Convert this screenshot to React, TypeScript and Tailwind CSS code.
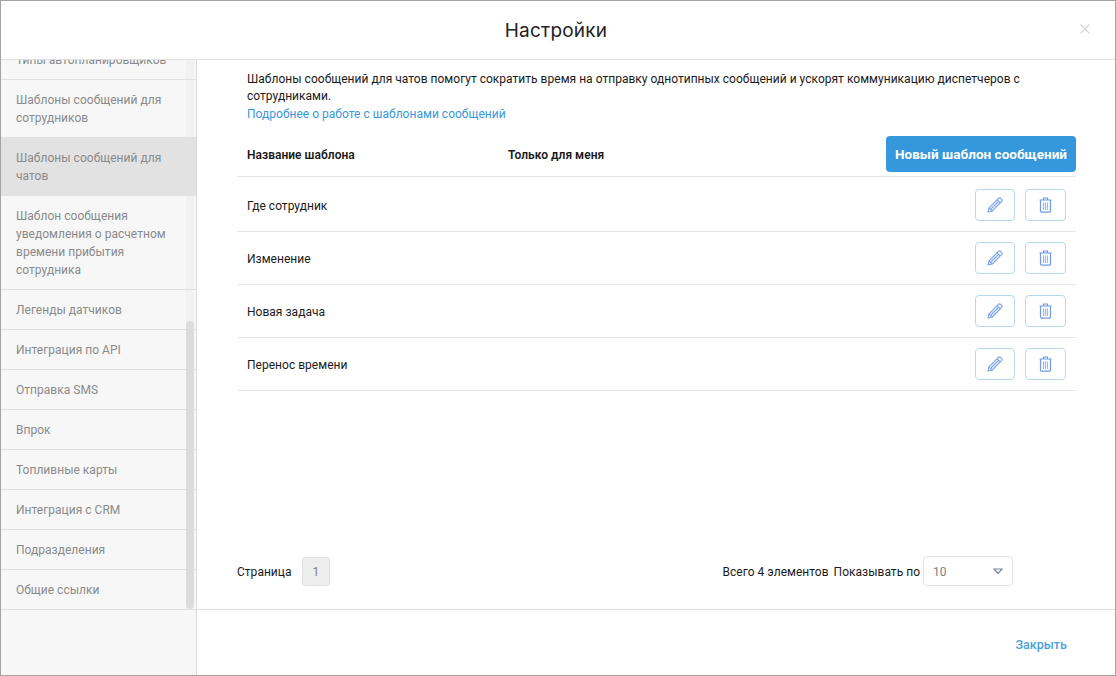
const menu = [
  { title: "Шаблоны сообщений для сотрудников" },
  { title: "Шаблоны сообщений для чатов", active: true },
  { title: "Шаблон сообщения уведомления о расчетном времени прибытия сотрудника" },
  { title: "Легенды датчиков" },
  { title: "Интеграция по API" },
  { title: "Отправка SMS" },
  { title: "Впрок" },
  { title: "Топливные карты" },
  { title: "Интеграция с CRM" },
  { title: "Подразделения" },
  { title: "Общие ссылки" },
];

const templates = ["Где сотрудник", "Изменение", "Новая задача", "Перенос времени"];

function PencilIcon() {
  return (
    <svg width="16" height="16" viewBox="0 0 16 16" fill="none" stroke="#7ba4e8" strokeWidth="1.1" strokeLinejoin="round">
      <path d="M1 15l1-4.2L11.6 1.2a1.2 1.2 0 0 1 1.7 0l1.5 1.5a1.2 1.2 0 0 1 0 1.7L5.2 14z" fill="#f1f5fd" />
      <path d="M2 10.8L5.2 14M10 2.8l3.2 3.2M4 11.9l6.9-6.9" />
    </svg>
  );
}

function TrashIcon() {
  return (
    <svg width="13" height="16" viewBox="0 0 13 16" fill="none" stroke="#6f9be6" strokeWidth="1.2">
      <path d="M0.5 3h12M4.5 3V1h4v2" />
      <path d="M1.5 3v10.8a1.4 1.4 0 0 0 1.4 1.4h7.2a1.4 1.4 0 0 0 1.4-1.4V3" />
      <path d="M4.5 5.5v7.5M6.5 5.5v7.5M8.5 5.5v7.5" stroke="#9dbcee" />
    </svg>
  );
}

function TemplateRow({ name, first }: { name: string; first: boolean }) {
  return (
    <div className={`flex items-center justify-between border-b border-[#e6e6e6] px-[10px] ${first ? "h-[55px] pt-[2px]" : "h-[53px]"}`}>
      <span className="pt-[2px]">{name}</span>
      <div className="flex gap-[10px]">
        <button className="flex h-[32px] w-[40px] items-center justify-center rounded-[4px] border border-[#b5d8f0]">
          <PencilIcon />
        </button>
        <button className="flex h-[32px] w-[41px] items-center justify-center rounded-[4px] border border-[#b5d8f0]">
          <TrashIcon />
        </button>
      </div>
    </div>
  );
}

export default function App() {
  return (
    <div className="flex h-[676px] w-[1116px] flex-col overflow-hidden border border-[#a3a3a3] bg-white font-['Roboto',sans-serif] text-[12px] tracking-[0.02px] text-[#1a1a1a]">
      {/* Header */}
      <div className="relative flex h-[59px] shrink-0 items-center justify-center border-b border-[#e0e0e0]">
        <h1 className="mr-[4px] pt-[2px] font-['Inter',sans-serif] text-[19px] font-normal tracking-[0.2px] text-[#222]">Настройки</h1>
        <span className="absolute right-[25px] top-[23px] text-[#d4d4d4]">
          <svg width="10" height="10" viewBox="0 0 10 10" fill="none" stroke="currentColor" strokeWidth="1.1" className="block">
            <path d="M0.5 0.5l9 9M9.5 0.5l-9 9" />
          </svg>
        </span>
      </div>

      <div className="flex min-h-0 flex-1">
        {/* Sidebar */}
        <div className="relative w-[196px] shrink-0 overflow-hidden border-r border-[#dcdcdc] bg-[#f7f7f7] text-[#8a8a8a]">
          <div className="absolute bottom-[66px] right-[2px] top-0 w-[8px] rounded-[4px] bg-[#f1f1f1]" />
          <div className="relative h-[20px] overflow-hidden border-b border-[#e0e0e0] pl-[15px]">
            <span className="absolute top-[-9px] whitespace-nowrap">Типы автопланировщиков</span>
          </div>
          {menu.map((item) => (
            <div
              key={item.title}
              className={`relative border-b border-[#e0e0e0] pb-[10px] pl-[15px] pr-[20px] pt-[11px] leading-[18px] ${item.active ? "bg-[#e2e2e2]" : ""}`}
            >
              {item.title}
            </div>
          ))}
          <div className="absolute bottom-[66px] right-[2px] h-[288px] w-[8px] rounded-[4px] bg-[#dcdcdc]" />
        </div>

        {/* Main column */}
        <div className="flex min-w-0 flex-1 flex-col">
          <div className="flex min-h-0 flex-1 flex-col pl-[40px] pr-[39px]">
            <div className="pl-[10px] pr-[10px] pt-[10.5px] leading-[17.5px]">
              <p>
                Шаблоны сообщений для чатов помогут сократить время на отправку однотипных сообщений и ускорят коммуникацию диспетчеров с сотрудниками.
              </p>
              <a className="text-[#3a96dd]">Подробнее о работе с шаблонами сообщений</a>
            </div>

            {/* Table header */}
            <div className="mt-[13px] flex h-[41px] items-start border-b border-[#e6e6e6] pl-[10px] font-semibold">
              <span className="mt-[10px] w-[261px]">Название шаблона</span>
              <span className="mt-[10px]">Только для меня</span>
              <button className="ml-auto h-[36px] w-[190px] rounded-[4px] bg-[#3598dc] text-[13.5px] font-bold text-white">
                Новый шаблон сообщений
              </button>
            </div>

            {templates.map((name, i) => (
              <TemplateRow key={name} name={name} first={i === 0} />
            ))}

            {/* Pagination */}
            <div className="mt-auto flex items-center justify-between pb-[23px] pr-[63px]">
              <div className="flex items-center gap-[10px]">
                <span className="w-[55px] pt-[2px]">Страница</span>
                <span className="flex h-[29px] w-[28px] items-center justify-center rounded-[3px] border border-[#e2e2e2] bg-[#eeeeee] pt-[2px] text-[#808080]">
                  1
                </span>
              </div>
              <div className="flex items-center">
                <span className="pt-[2px]">Всего 4 элементов</span>
                <span className="ml-[5px] pt-[2px]">Показывать по</span>
                <div className="ml-[3px] flex h-[30px] w-[90px] items-center justify-between rounded-[4px] border border-[#e2e2e2] pl-[9px] pr-[9px] text-[#808080]">
                  <span className="pt-[2px]">10</span>
                  <svg width="10" height="7" viewBox="0 0 10 7" fill="none" stroke="#7a8696" strokeWidth="1.2">
                    <path d="M1 1h8L5 5.5z" />
                  </svg>
                </div>
              </div>
            </div>
          </div>

          {/* Footer */}
          <div className="flex h-[66px] shrink-0 items-center justify-end border-t border-[#e0e0e0] pr-[48px] pt-[5px]">
            <a className="text-[12.5px] font-medium text-[#4a9fe0]">Закрыть</a>
          </div>
        </div>
      </div>
    </div>
  );
}
